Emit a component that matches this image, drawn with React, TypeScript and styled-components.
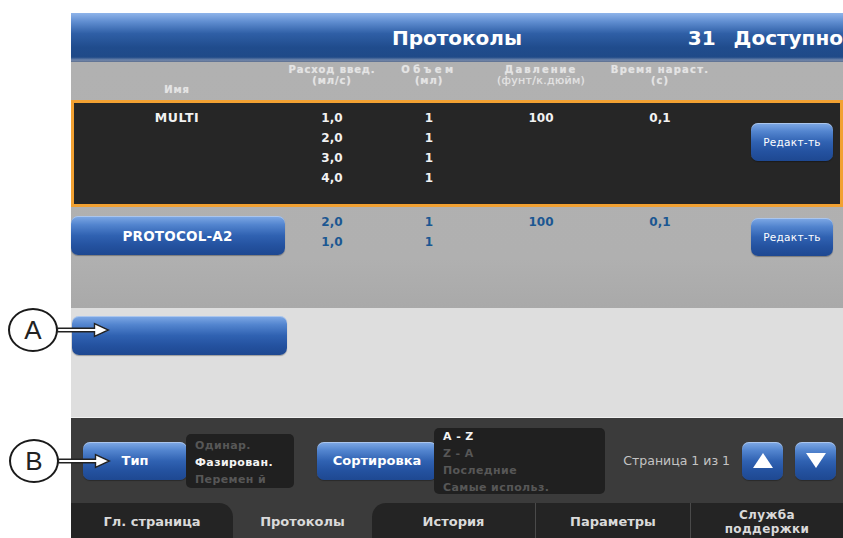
import React from "react";
import styled, { createGlobalStyle } from "styled-components";

const GlobalStyle = createGlobalStyle`
  html, body {
    margin: 0;
    padding: 0;
    background: #ffffff;
  }
  body {
    font-family: "DejaVu Sans", "Liberation Sans", sans-serif;
  }
  * { box-sizing: border-box; }
`;

const Page = styled.div`
  position: relative;
  width: 843px;
  height: 538px;
  overflow: hidden;
  padding: 13px 0 0 71px;
  background: #ffffff;
`;

const Screen = styled.div`
  width: 772px;
  height: 525px;
  display: flex;
  flex-direction: column;
`;

/* ---------- header ---------- */

const Header = styled.header`
  flex: 0 0 49px;
  display: grid;
  grid-template-columns: 1fr auto 1fr;
  align-items: center;
  background: linear-gradient(
    180deg,
    #8fb4ea 0%,
    #5f8dd0 18%,
    #2f5fa6 42%,
    #204c8d 70%,
    #1f4a88 90%,
    #7086ab 96%,
    #5d6f8f 100%
  );
  color: #ffffff;
  font-weight: bold;
  font-size: 20px;
`;

const Title = styled.h1`
  margin: 0;
  font-size: 20px;
  font-weight: bold;
  grid-column: 2;
`;

const Count = styled.div`
  grid-column: 3;
  justify-self: end;
  display: flex;
  gap: 18px;
  white-space: nowrap;
`;

/* ---------- protocol list ---------- */

const ListArea = styled.section`
  flex: 0 0 246px;
  background: linear-gradient(180deg, #b1b1b1 0%, #b0b0b0 80%, #a9a9a9 100%);
  display: flex;
  flex-direction: column;
`;

const columns = "212px 98px 96px 128px 110px 1fr";

const HeadRow = styled.div`
  height: 38px;
  display: grid;
  grid-template-columns: ${columns};
  align-items: start;
  padding-top: 2px;
  color: #e4e4e4;
  font-size: 10px;
  font-weight: bold;
  line-height: 11px;
  text-align: center;
`;

const HeadCell = styled.div<{ $low?: boolean; $spread?: number }>`
  margin-top: ${(p) => (p.$low ? 20 : 0)}px;
  letter-spacing: ${(p) => p.$spread ?? 0.9}px;
  text-shadow: 0 0 1px rgba(255, 255, 255, 0.4);
`;

const HeadUnit = styled.span<{ $light?: boolean }>`
  display: block;
  font-weight: ${(p) => (p.$light ? "normal" : "bold")};
  font-size: ${(p) => (p.$light ? 11 : 10)}px;
  letter-spacing: ${(p) => (p.$light ? "0.3px" : "0.9px")};
`;

const Row = styled.div<{ $selected?: boolean }>`
  display: grid;
  grid-template-columns: ${columns};
  align-items: start;
  height: ${(p) => (p.$selected ? 107 : 55)}px;
  padding-top: ${(p) => (p.$selected ? 8 : 5)}px;
  background: ${(p) => (p.$selected ? "#262626" : "transparent")};
  box-shadow: ${(p) => (p.$selected ? "inset 0 0 0 3px #f2a132" : "none")};
  color: ${(p) => (p.$selected ? "#f2f2f2" : "#1b5792")};
`;

const Cell = styled.div`
  display: flex;
  flex-direction: column;
  align-items: center;
  font-size: 12px;
  font-weight: bold;
  line-height: 20px;
`;

const NameText = styled.div`
  font-size: 12.5px;
  font-weight: bold;
  letter-spacing: 0.6px;
  line-height: 20px;
  text-align: center;
`;

const EditCell = styled.div<{ $offset: number }>`
  justify-self: end;
  margin-right: 10px;
  margin-top: ${(p) => p.$offset}px;
`;

const Filler = styled.div`
  flex: 1;
`;

/* ---------- buttons ---------- */

const BlueButton = styled.button`
  border: none;
  padding: 0;
  border-radius: 7px;
  background: linear-gradient(
    180deg,
    #80aae6 0%,
    #5385cf 22%,
    #3062b2 50%,
    #2452a0 75%,
    #1e4891 100%
  );
  box-shadow: inset 0 1px 0 rgba(255, 255, 255, 0.35), 0 1px 1px rgba(0, 0, 0, 0.3);
  color: #ffffff;
  font-family: "DejaVu Sans", sans-serif;
  font-weight: bold;
  display: flex;
  align-items: center;
  justify-content: center;
`;

const NameButton = styled(BlueButton)`
  width: 214px;
  height: 39px;
  margin: 4px 0 0 1px;
  font-size: 13.5px;
  letter-spacing: 0.2px;
`;

const EmptyButton = styled(BlueButton)`
  width: 215px;
  height: 39px;
  margin-left: 1px;
`;

const EditButton = styled(BlueButton)`
  width: 82px;
  height: 38px;
  font-size: 10.5px;
  font-weight: normal;
  letter-spacing: 0.3px;
`;

const ToolButton = styled(BlueButton)<{ $w: number }>`
  width: ${(p) => p.$w}px;
  height: 38px;
  font-size: 13px;
  flex: none;
`;

const ArrowButton = styled(BlueButton)`
  width: 41px;
  height: 38px;
  flex: none;
`;

/* ---------- empty list area ---------- */

const EmptyArea = styled.section`
  flex: 0 0 110px;
  background: #dedede;
  padding-top: 8px;
  border-bottom: 1px solid #f0f0f0;
`;

/* ---------- toolbar ---------- */

const Toolbar = styled.div`
  flex: 0 0 85px;
  display: flex;
  align-items: center;
  padding: 0 7px 0 12px;
  background: #3b3b3b;
`;

const OptionBox = styled.div<{ $w: number; $h: number; $pull: number }>`
  position: relative;
  width: ${(p) => p.$w}px;
  height: ${(p) => p.$h}px;
  margin-left: ${(p) => -p.$pull}px;
  flex: none;
  border-radius: 5px;
  background: #202020;
  padding: 3px 0 0 9px;
  display: flex;
  flex-direction: column;
  justify-content: center;
  font-size: 11px;
  font-weight: bold;
  line-height: 17px;
  letter-spacing: 0.4px;
`;

const Option = styled.div<{ $on?: boolean }>`
  color: ${(p) => (p.$on ? "#f4f4f4" : "#575757")};
  white-space: nowrap;
`;

const Spacer = styled.div<{ $w: number }>`
  flex: none;
  width: ${(p) => p.$w}px;
`;

const Pager = styled.div`
  margin-left: auto;
  display: flex;
  align-items: center;
  gap: 12px;
`;

const PageLabel = styled.span`
  color: #c4c4c4;
  font-size: 12.5px;
  white-space: nowrap;
`;

/* ---------- tabs ---------- */

const TabBar = styled.nav`
  flex: 0 0 35px;
  display: flex;
  background: #3b3b3b;
`;

const Tab = styled.div<{ $w: number; $active?: boolean; $round?: "left" | "right"; $sep?: boolean }>`
  width: ${(p) => p.$w}px;
  flex: none;
  display: flex;
  align-items: center;
  justify-content: center;
  text-align: center;
  background: ${(p) => (p.$active ? "transparent" : "#242424")};
  border-top-right-radius: ${(p) => (p.$round === "right" ? 14 : 0)}px;
  border-top-left-radius: ${(p) => (p.$round === "left" ? 14 : 0)}px;
  border-left: ${(p) => (p.$sep ? "1px solid #4a4a4a" : "none")};
  color: #dadada;
  font-size: 13px;
  font-weight: bold;
  line-height: 14px;
  padding-top: 3px;
`;

const TabSmall = styled.span`
  font-size: 12px;
  letter-spacing: 0.4px;
`;

/* ---------- annotation callouts ---------- */

const Callout = styled.div<{ $x: number; $y: number }>`
  position: absolute;
  left: ${(p) => p.$x}px;
  top: ${(p) => p.$y}px;
  display: flex;
  align-items: center;
`;

const CalloutRing = styled.div`
  width: 50px;
  height: 44px;
  border: 2px solid #1a1a1a;
  border-radius: 50%;
  background: #ffffff;
  display: flex;
  align-items: center;
  justify-content: center;
  font-family: "Liberation Sans", sans-serif;
  font-size: 26px;
  color: #222222;
  flex: none;
`;

const CalloutArrow = () => (
  <svg width="53" height="16" viewBox="-0.5 -8 53 16" style={{ marginLeft: -1 }}>
    <path
      d="M0,-1.8 H37 V-6.5 L51,0 L37,6.5 V1.8 H0 Z"
      fill="#ffffff"
      stroke="#222222"
      strokeWidth="1.4"
      strokeLinejoin="miter"
    />
  </svg>
);

const Triangle = ({ up }: { up?: boolean }) => (
  <svg width="20" height="15" viewBox="0 0 20 15">
    <path d={up ? "M10,0 L20,15 L0,15 Z" : "M0,0 L20,0 L10,15 Z"} fill="#ffffff" />
  </svg>
);

type Protocol = {
  name: string;
  rates: string[];
  volumes: string[];
  pressure: string;
  rise: string;
};

const protocols: Protocol[] = [
  { name: "MULTI", rates: ["1,0", "2,0", "3,0", "4,0"], volumes: ["1", "1", "1", "1"], pressure: "100", rise: "0,1" },
  { name: "PROTOCOL-A2", rates: ["2,0", "1,0"], volumes: ["1", "1"], pressure: "100", rise: "0,1" },
];

export default function App() {
  return (
    <>
      <GlobalStyle />
      <Page>
        <Screen>
          <Header>
            <Title>Протоколы</Title>
            <Count>
              <span>31</span>
              <span>Доступно</span>
            </Count>
          </Header>

          <ListArea>
            <HeadRow>
              <HeadCell $low>Имя</HeadCell>
              <HeadCell>
                Расход введ.
                <HeadUnit>(мл/с)</HeadUnit>
              </HeadCell>
              <HeadCell $spread={3.5}>
                Объем
                <HeadUnit>(мл)</HeadUnit>
              </HeadCell>
              <HeadCell $spread={2}>
                Давление
                <HeadUnit $light>(фунт/к.дюйм)</HeadUnit>
              </HeadCell>
              <HeadCell $spread={1.2}>
                Время нараст.
                <HeadUnit>(с)</HeadUnit>
              </HeadCell>
              <div />
            </HeadRow>

            {protocols.map((p, i) => {
              const selected = i === 0;
              return (
                <Row key={p.name} $selected={selected}>
                  <Cell>
                    {selected ? <NameText>{p.name}</NameText> : <NameButton>{p.name}</NameButton>}
                  </Cell>
                  <Cell>
                    {p.rates.map((r, k) => (
                      <span key={k}>{r}</span>
                    ))}
                  </Cell>
                  <Cell>
                    {p.volumes.map((v, k) => (
                      <span key={k}>{v}</span>
                    ))}
                  </Cell>
                  <Cell>{p.pressure}</Cell>
                  <Cell>{p.rise}</Cell>
                  <EditCell $offset={selected ? 15 : 6}>
                    <EditButton>Редакт-ть</EditButton>
                  </EditCell>
                </Row>
              );
            })}
            <Filler />
          </ListArea>

          <EmptyArea>
            <EmptyButton />
          </EmptyArea>

          <Toolbar>
            <ToolButton $w={104}>Тип</ToolButton>
            <OptionBox $w={108} $h={54} $pull={1}>
              <Option>Одинар.</Option>
              <Option $on>Фазирован.</Option>
              <Option>Перемен й</Option>
            </OptionBox>
            <Spacer $w={23} />
            <ToolButton $w={120}>Сортировка</ToolButton>
            <OptionBox $w={171} $h={66} $pull={3}>
              <Option $on>A - Z</Option>
              <Option>Z - A</Option>
              <Option>Последние</Option>
              <Option>Самые использ.</Option>
            </OptionBox>
            <Pager>
              <PageLabel>Страница 1 из 1</PageLabel>
              <ArrowButton>
                <Triangle up />
              </ArrowButton>
              <ArrowButton>
                <Triangle />
              </ArrowButton>
            </Pager>
          </Toolbar>

          <TabBar>
            <Tab $w={162} $round="right">Гл. страница</Tab>
            <Tab $w={139} $active>Протоколы</Tab>
            <Tab $w={163} $round="left">История</Tab>
            <Tab $w={155} $sep>Параметры</Tab>
            <Tab $w={153} $sep>
              <TabSmall>
                Служба
                <br />
                поддержки
              </TabSmall>
            </Tab>
          </TabBar>
        </Screen>

        <Callout $x={8} $y={308}>
          <CalloutRing>A</CalloutRing>
          <CalloutArrow />
        </Callout>
        <Callout $x={9} $y={439}>
          <CalloutRing>B</CalloutRing>
          <CalloutArrow />
        </Callout>
      </Page>
    </>
  );
}
